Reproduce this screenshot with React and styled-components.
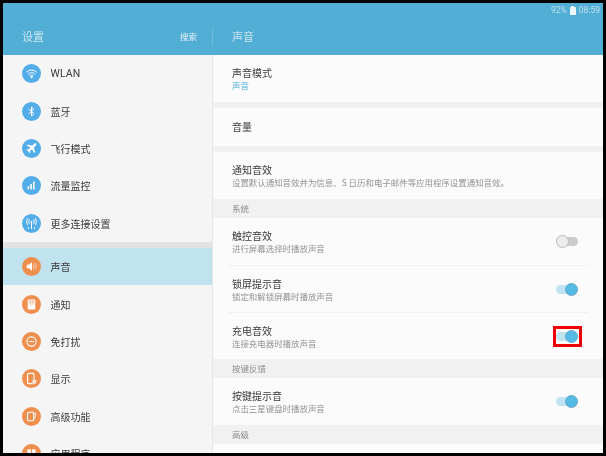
import React from "react";
import styled, { createGlobalStyle } from "styled-components";

const GlobalStyle = createGlobalStyle`
  html, body {
    margin: 0;
    padding: 0;
    background: #000;
  }
  * {
    box-sizing: border-box;
  }
`;

const Frame = styled.div`
  width: 606px;
  height: 456px;
  padding: 3px;
  background: #000;
`;

const Screen = styled.div`
  width: 600px;
  height: 450px;
  display: flex;
  flex-direction: column;
  overflow: hidden;
  background: #fbfbfb;
  font-family: "Noto Sans CJK SC", "Noto Sans", sans-serif;
  filter: blur(0.4px);
`;

const Header = styled.header`
  height: 52px;
  flex-shrink: 0;
  display: flex;
  flex-direction: column;
  background: #52aed4;
`;

const StatusBar = styled.div`
  height: 14px;
  padding: 0 3px 0 0;
  display: flex;
  justify-content: flex-end;
  align-items: center;
  gap: 3px;
  color: rgba(255, 255, 255, 0.62);
  font-family: Roboto, sans-serif;
  font-size: 8.5px;
`;

const Battery = styled.span`
  position: relative;
  width: 6px;
  height: 8px;
  margin-top: 1px;
  background: rgba(255, 255, 255, 0.9);
  border-radius: 0.5px;

  &::before {
    content: "";
    position: absolute;
    top: -1px;
    left: 1.5px;
    width: 3px;
    height: 1px;
    background: rgba(255, 255, 255, 0.9);
  }
`;

const TitleBar = styled.div`
  flex: 1;
  display: grid;
  grid-template-columns: 210px 1fr;
  align-items: center;
`;

const TitleLeft = styled.div`
  height: 17px;
  padding: 0 15px 0 19px;
  display: flex;
  justify-content: space-between;
  align-items: center;
  border-right: 1px solid rgba(255, 255, 255, 0.18);
`;

const Title = styled.span`
  font-size: 11px;
  color: rgba(255, 255, 255, 0.68);
`;

const Search = styled.span`
  font-size: 8.5px;
  color: rgba(255, 255, 255, 0.85);
`;

const TitleRight = styled.div`
  height: 17px;
  padding-left: 19px;
  display: flex;
  align-items: center;
`;

const Body = styled.div`
  flex: 1;
  min-height: 0;
  display: grid;
  grid-template-columns: 210px 1fr;
`;

const Sidebar = styled.nav`
  overflow: hidden;
  background: #f5f5f5;
  border-right: 1px solid #e6e6e6;
`;

const NavItem = styled.div`
  height: 37.4px;
  padding-left: 19px;
  display: flex;
  align-items: center;
  gap: 9.5px;
  font-size: 10px;
  color: #3a3a3a;
  background: ${(p) => (p.$active ? "#c1e3ef" : "transparent")};
`;

const NavLatin = styled.span`
  font-family: Roboto, sans-serif;
  font-size: 10.5px;
  letter-spacing: 0.1px;
`;

const NavDivider = styled.div`
  height: 6px;
  background: #e3e3e3;
`;

const Badge = styled.span`
  width: 19px;
  height: 19px;
  flex-shrink: 0;
  display: flex;
  align-items: center;
  justify-content: center;
  border-radius: 50%;
  background: ${(p) => (p.$orange ? "#ee8f4e" : "#53ade8")};
`;

const Content = styled.main`
  overflow: hidden;
  background: #fbfbfb;
`;

const Group = styled.section`
  padding: 0 14.5px 0 15px;
`;

const Row = styled.div`
  height: ${(p) => p.$h || 47}px;
  padding: 0 10.5px 0 4px;
  display: flex;
  align-items: center;
  justify-content: space-between;
  border-top: ${(p) => (p.$line ? "1px solid #f1f1f1" : "none")};
`;

const RowText = styled.div`
  display: flex;
  flex-direction: column;
  gap: 0;
`;

const RowTitle = styled.div`
  font-size: 10px;
  line-height: 14px;
  color: #3a3a3a;
`;

const RowSub = styled.div`
  margin-top: -1px;
  font-size: 8.45px;
  line-height: 12px;
  white-space: nowrap;
  color: ${(p) => (p.$accent ? "#52aed4" : "#929292")};
`;

const Gap = styled.div`
  height: ${(p) => p.$h}px;
  background: #f1f1f1;
`;

const SectionLabel = styled.div`
  height: 19px;
  padding: 0 0 1px 19px;
  display: flex;
  align-items: center;
  background: #f1f1f1;
  font-size: 8.5px;
  line-height: 1;
  color: #8c8c8c;
`;

const Toggle = styled.div`
  position: relative;
  width: 22px;
  height: 9px;
  border-radius: 5px;
  background: ${(p) => (p.$on ? "#bfe4f2" : "#cbcbcb")};
`;

const Thumb = styled.span`
  position: absolute;
  top: -2px;
  ${(p) => (p.$on ? "right: 0;" : "left: -0.5px;")}
  width: 13px;
  height: 13px;
  border-radius: 50%;
  background: ${(p) => (p.$on ? "#55bbe6" : "#ececec")};
  border: 0.5px solid ${(p) => (p.$on ? "#6aa9c4" : "#bdbdbd")};
`;

const Highlight = styled.span`
  position: absolute;
  top: -6px;
  left: -3px;
  width: 29px;
  height: 21px;
  border: 3px solid #f00000;
`;

const Ic = ({ children }) => (
  <svg width="13" height="13" viewBox="0 0 13 13" fill="none" stroke="#fff" strokeWidth="1" strokeLinecap="round" strokeLinejoin="round">
    {children}
  </svg>
);

const icons = {
  wifi: (
    <Ic>
      <path d="M1.5 5a7 7 0 0 1 10 0" />
      <path d="M3.3 6.9a4.6 4.6 0 0 1 6.4 0" />
      <path d="M5 8.7a2.2 2.2 0 0 1 3 0" />
      <circle cx="6.5" cy="10.2" r=".6" fill="#fff" />
    </Ic>
  ),
  bluetooth: (
    <Ic>
      <path d="M4 4.4l5 4.2-2.5 2.4V2l2.5 2.4-5 4.2" />
    </Ic>
  ),
  plane: (
    <Ic>
      <path
        d="M11.3 1.7c-.6-.6-1.6-.5-2.2.1L7.2 3.7 2.6 2.5 1.7 3.4l3.7 2.2-1.9 1.9-1.4-.2-.7.7 2 1.2 1.2 2 .7-.7-.2-1.4 1.9-1.9 2.2 3.7.9-.9-1.2-4.6 1.9-1.9c.6-.6.7-1.6.3-2z"
        fill="#fff"
        stroke="none"
      />
    </Ic>
  ),
  bars: (
    <Ic>
      <rect x="2.6" y="7" width="1.6" height="3.4" fill="#fff" stroke="none" />
      <rect x="5.3" y="5" width="1.6" height="5.4" fill="#fff" stroke="none" />
      <rect x="8" y="2.6" width="1.6" height="7.8" fill="#fff" stroke="none" />
    </Ic>
  ),
  antenna: (
    <Ic>
      <circle cx="6.5" cy="4.6" r=".9" fill="#fff" stroke="none" />
      <path d="M6.5 5.5v6" />
      <path d="M4.2 2.8a3.2 3.2 0 0 0 0 3.6M8.8 2.8a3.2 3.2 0 0 1 0 3.6" />
      <path d="M2.4 1.6a5.6 5.6 0 0 0 0 6M10.6 1.6a5.6 5.6 0 0 1 0 6" />
      <path d="M3.5 10.6v.8M9.5 10.6v.8" />
    </Ic>
  ),
  sound: (
    <Ic>
      <path d="M1.8 4.8h2.2l3-2.6v8.6l-3-2.6H1.8z" fill="#fff" stroke="none" />
      <path d="M8.6 4.8a2.4 2.4 0 0 1 0 3.4" strokeOpacity=".75" />
      <path d="M10 3.3a4.4 4.4 0 0 1 0 6.4" strokeOpacity=".55" />
    </Ic>
  ),
  notify: (
    <Ic>
      <rect x="2.7" y="1.6" width="7.6" height="9.8" rx=".8" fill="#fff" stroke="none" />
      <path d="M4.3 2.6v2.6M5.7 2.6v2.6M7.3 2.6v2.6M8.7 2.6v2.6" stroke="#ee8f4e" strokeWidth=".6" />
      <path d="M4 7h5" stroke="#f6c6a5" strokeWidth=".6" />
    </Ic>
  ),
  dnd: (
    <Ic>
      <circle cx="6.5" cy="6.5" r="4.6" strokeWidth="1.1" />
      <path d="M4.4 6.5h4.2" strokeWidth="1.1" />
    </Ic>
  ),
  display: (
    <Ic>
      <rect x="2.6" y="1.4" width="6.4" height="10.2" rx="1" strokeWidth="1.1" />
      <circle cx="9.4" cy="9.6" r="2.4" fill="#fff" stroke="#ee8f4e" strokeWidth=".6" />
      <circle cx="9.4" cy="9.6" r=".7" fill="#ee8f4e" stroke="none" />
    </Ic>
  ),
  advanced: (
    <Ic>
      <rect x="2.6" y="2.2" width="6" height="8.6" rx=".8" strokeWidth="1.1" />
      <path d="M8.8 3.4h2l-1 5.2" strokeWidth=".9" />
    </Ic>
  ),
  apps: (
    <Ic>
      <rect x="2.4" y="2.4" width="3.6" height="3.6" fill="#fff" stroke="none" />
      <rect x="7" y="2.4" width="3.6" height="3.6" fill="#fff" stroke="none" />
      <rect x="2.4" y="7" width="3.6" height="3.6" fill="#fff" stroke="none" />
      <rect x="7" y="7" width="3.6" height="3.6" fill="#fff" stroke="none" />
    </Ic>
  ),
};

const navTop = [
  { icon: "wifi", label: "WLAN", latin: true },
  { icon: "bluetooth", label: "蓝牙" },
  { icon: "plane", label: "飞行模式" },
  { icon: "bars", label: "流量监控" },
  { icon: "antenna", label: "更多连接设置" },
];

const navBottom = [
  { icon: "sound", label: "声音", active: true },
  { icon: "notify", label: "通知" },
  { icon: "dnd", label: "免打扰" },
  { icon: "display", label: "显示" },
  { icon: "advanced", label: "高级功能" },
  { icon: "apps", label: "应用程序" },
];

const Nav = ({ item, orange }) => (
  <NavItem $active={item.active}>
    <Badge $orange={orange}>{icons[item.icon]}</Badge>
    {item.latin ? <NavLatin>{item.label}</NavLatin> : item.label}
  </NavItem>
);

const SwitchRow = ({ title, sub, on, marked, line }) => (
  <Row $line={line}>
    <RowText>
      <RowTitle>{title}</RowTitle>
      <RowSub>{sub}</RowSub>
    </RowText>
    <Toggle $on={on}>
      <Thumb $on={on} />
      {marked && <Highlight />}
    </Toggle>
  </Row>
);

export default function App() {
  return (
    <Frame>
      <GlobalStyle />
      <Screen>
        <Header>
          <StatusBar>
            <span>92%</span>
            <Battery />
            <span>08:59</span>
          </StatusBar>
          <TitleBar>
            <TitleLeft>
              <Title>设置</Title>
              <Search>搜索</Search>
            </TitleLeft>
            <TitleRight>
              <Title>声音</Title>
            </TitleRight>
          </TitleBar>
        </Header>
        <Body>
          <Sidebar>
            {navTop.map((item) => (
              <Nav key={item.label} item={item} />
            ))}
            <NavDivider />
            {navBottom.map((item) => (
              <Nav key={item.label} item={item} orange />
            ))}
          </Sidebar>
          <Content>
            <Group>
              <Row>
                <RowText>
                  <RowTitle>声音模式</RowTitle>
                  <RowSub $accent>声音</RowSub>
                </RowText>
              </Row>
            </Group>
            <Gap $h={5.5} />
            <Group>
              <Row $h={38.5}>
                <RowTitle>音量</RowTitle>
              </Row>
            </Group>
            <Gap $h={6} />
            <Group>
              <Row>
                <RowText>
                  <RowTitle>通知音效</RowTitle>
                  <RowSub>设置默认通知音效并为信息、S 日历和电子邮件等应用程序设置通知音效。</RowSub>
                </RowText>
              </Row>
            </Group>
            <SectionLabel>系统</SectionLabel>
            <Group>
              <SwitchRow title="触控音效" sub="进行屏幕选择时播放声音" />
              <SwitchRow title="锁屏提示音" sub="锁定和解锁屏幕时播放声音" on line />
              <SwitchRow title="充电音效" sub="连接充电器时播放声音" on marked line />
            </Group>
            <SectionLabel>按键反馈</SectionLabel>
            <Group>
              <SwitchRow title="按键提示音" sub="点击三星键盘时播放声音" on />
            </Group>
            <SectionLabel>高级</SectionLabel>
          </Content>
        </Body>
      </Screen>
    </Frame>
  );
}
